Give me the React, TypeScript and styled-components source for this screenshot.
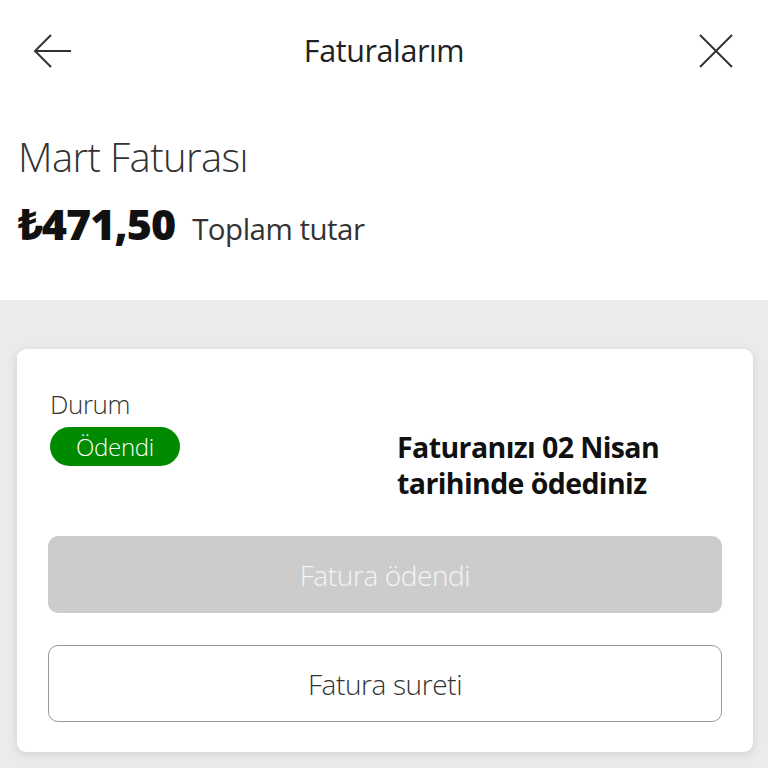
import styled, { createGlobalStyle } from 'styled-components'

const GlobalStyle = createGlobalStyle`
  html, body {
    margin: 0;
    padding: 0;
    background: #ffffff;
  }
  body {
    font-family: "Open Sans", "Noto Sans", sans-serif;
    color: #333333;
  }
`

const Page = styled.div`
  width: 768px;
  height: 768px;
  display: flex;
  flex-direction: column;
  overflow: hidden;
`

const TopBar = styled.header`
  height: 102px;
  display: flex;
  align-items: center;
  justify-content: space-between;
  padding: 0 32px 0 32px;
  box-sizing: border-box;
`

const IconButton = styled.button`
  width: 40px;
  height: 40px;
  padding: 0;
  border: none;
  background: none;
  display: flex;
  align-items: center;
  justify-content: center;
  color: #333333;
`

const Title = styled.h1`
  margin: 0 0 2px;
  font-size: 30.5px;
  font-weight: 400;
  letter-spacing: -0.4px;
  color: #222222;
`

const Summary = styled.section`
  padding: 28px 18px 0;
  height: 198px;
  box-sizing: border-box;
`

const BillName = styled.h2`
  margin: 0;
  font-size: 40px;
  font-weight: 300;
  letter-spacing: -0.6px;
  line-height: 54px;
  color: #333333;
`

const AmountRow = styled.div`
  display: flex;
  align-items: baseline;
  gap: 17px;
  margin-top: 10px;
`

const Amount = styled.span`
  font-size: 43px;
  font-weight: 800;
  letter-spacing: -1px;
  color: #111111;
`

const AmountLabel = styled.span`
  font-size: 29.5px;
  font-weight: 400;
  letter-spacing: -0.5px;
  color: #333333;
`

const Content = styled.main`
  flex: 1;
  background: #ebebeb;
  padding: 49px 15px 0 17px;
`

const Card = styled.div`
  background: #ffffff;
  border-radius: 9px;
  box-shadow: 0 2px 8px rgba(0, 0, 0, 0.12);
  padding: 38px 31px 31px;
  height: 403px;
  box-sizing: border-box;
  display: flex;
  flex-direction: column;
`

const StatusRow = styled.div`
  display: grid;
  grid-template-columns: 347px 1fr;
  align-items: start;
  padding-left: 2px;
`

const StatusLabel = styled.div`
  font-size: 26px;
  font-weight: 300;
  letter-spacing: -0.4px;
  color: #333333;
  line-height: 34px;
`

const Badge = styled.span`
  display: inline-flex;
  align-items: center;
  height: 39px;
  padding: 0 26px;
  margin-top: 6px;
  border-radius: 20px;
  background: #008a00;
  color: #ffffff;
  font-size: 24px;
  font-weight: 300;
  letter-spacing: -0.3px;
`

const PaidNote = styled.p`
  margin: 42px 0 0;
  font-size: 28.5px;
  font-weight: 700;
  line-height: 36px;
  letter-spacing: -0.6px;
  color: #111111;
`

const Actions = styled.div`
  display: flex;
  flex-direction: column;
  gap: 32px;
  margin-top: 35px;
`

const ActionButton = styled.button<{ $variant: 'disabled' | 'outline' }>`
  height: 77px;
  width: 100%;
  border-radius: 10px;
  font-family: inherit;
  font-size: 28px;
  font-weight: 300;
  letter-spacing: -0.4px;
  background: ${(p) => (p.$variant === 'disabled' ? '#cccccc' : '#ffffff')};
  color: ${(p) => (p.$variant === 'disabled' ? '#f4f4f4' : '#333333')};
  border: ${(p) => (p.$variant === 'disabled' ? 'none' : '1.5px solid #999999')};
`

function BackIcon() {
  return (
    <svg width="40" height="36" viewBox="0 0 40 36" fill="none" stroke="currentColor" strokeWidth="2">
      <path d="M19 2 L3 18 L19 34" />
      <path d="M3 18 H39" />
    </svg>
  )
}

function CloseIcon() {
  return (
    <svg width="36" height="36" viewBox="0 0 36 36" fill="none" stroke="currentColor" strokeWidth="2">
      <path d="M2 2 L34 34" />
      <path d="M34 2 L2 34" />
    </svg>
  )
}

export default function App() {
  return (
    <Page>
      <GlobalStyle />
      <TopBar>
        <IconButton aria-label="Geri">
          <BackIcon />
        </IconButton>
        <Title>Faturalarım</Title>
        <IconButton aria-label="Kapat">
          <CloseIcon />
        </IconButton>
      </TopBar>
      <Summary>
        <BillName>Mart Faturası</BillName>
        <AmountRow>
          <Amount>₺471,50</Amount>
          <AmountLabel>Toplam tutar</AmountLabel>
        </AmountRow>
      </Summary>
      <Content>
        <Card>
          <StatusRow>
            <div>
              <StatusLabel>Durum</StatusLabel>
              <Badge>Ödendi</Badge>
            </div>
            <PaidNote>
              Faturanızı 02 Nisan
              <br />
              tarihinde ödediniz
            </PaidNote>
          </StatusRow>
          <Actions>
            <ActionButton $variant="disabled">Fatura ödendi</ActionButton>
            <ActionButton $variant="outline">Fatura sureti</ActionButton>
          </Actions>
        </Card>
      </Content>
    </Page>
  )
}
